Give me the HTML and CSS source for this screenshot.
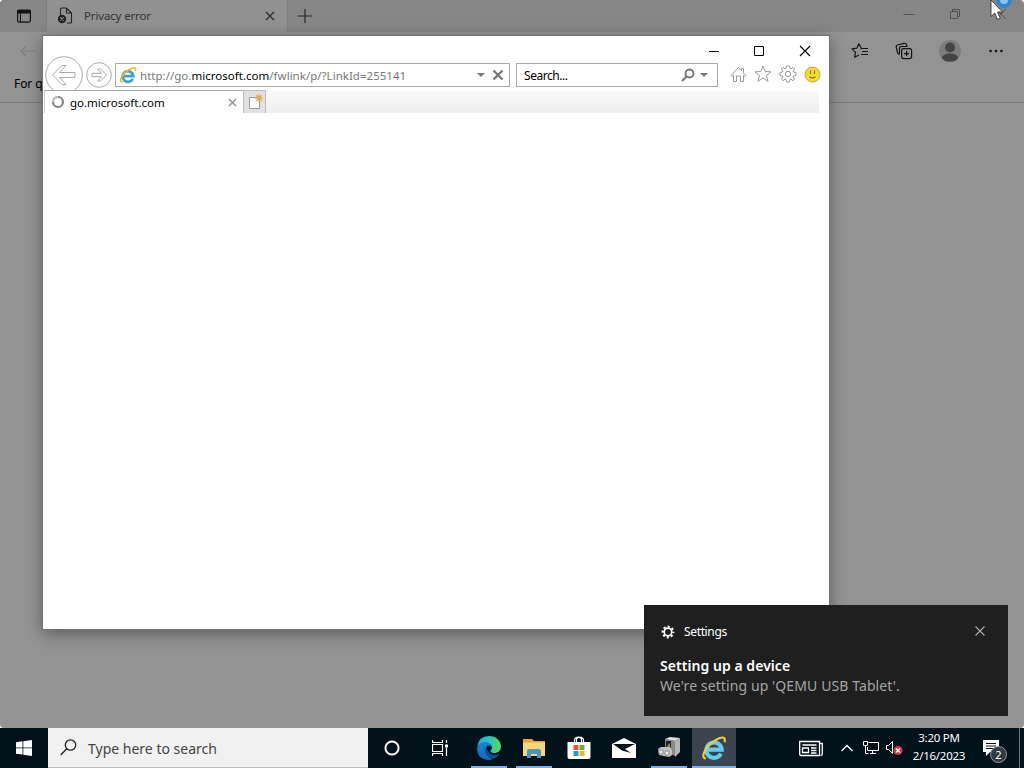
FILE: index.html
```html
<!DOCTYPE html>
<html lang="en">
<head>
    <meta charset="utf-8">
    <title>Desktop</title>
    <link rel="stylesheet" href="styles.css">
</head>
<body>
    <div class="desktop">
        <!-- Edge, behind -->
        <div class="edge">
            <div class="edge-tabs">
                <div class="tab-actions">
                    <svg width="16" height="16" viewBox="0 0 16 16"><rect x="1.6" y="2.1" width="12.8" height="12" rx="1.5" fill="none" stroke="#111" stroke-width="1.2"/><path d="M1.5 2h13v3.5h-13z" fill="#111"/><path d="M4.5 5v9" stroke="#111"/></svg>
                </div>
                <div class="edge-tab">
                    <svg width="17" height="17" viewBox="0 0 17 17" fill="none" stroke="#222" stroke-width="1.1"><path d="M3.5 8V2Q3.500 1 4.500 1H9.500L14.500 6V15Q14.500 16 13.500 16H10M9.500 1V6H14.500"/><circle cx="5" cy="12" r="4.200" fill="#222" stroke="none"/><path d="M3.400 10.400L6.600 13.600M6.600 10.400L3.400 13.600" stroke="#939393"/></svg>
                    <span class="edge-tab-title">Privacy error</span>
                    <svg width="10" height="10" viewBox="0 0 10 10"><path d="M1 1l8 8M9 1l-8 8" stroke="#333" stroke-width="1.5"/></svg>
                </div>
                <svg class="new-tab" width="14" height="14" viewBox="0 0 14 14"><path d="M7 0v14M0 7h14" stroke="#222" stroke-width="1.1"/></svg>
                <div class="edge-controls">
                    <svg width="12" height="12" viewBox="0 0 12 12"><path d="M.5 6.500h11" stroke="#555"/></svg>
                    <svg width="12" height="12" viewBox="0 0 12 12" fill="none" stroke="#505050"><path d="M1.500 3.500h7v7h-7zM3.500 3.500v-2h7v7h-2"/></svg>
                    <svg width="12" height="12" viewBox="0 0 12 12"><path d="M1 1l10 10M11 1L1 11" stroke="#555"/></svg>
                </div>
            </div>
            <div class="edge-toolbar">
                <svg class="edge-back" width="16" height="12" viewBox="0 0 16 12"><path d="M16 6H1M6 1L1 6l5 5" fill="none" stroke="#7c7c7c" stroke-width="1.200"/></svg>
                <div class="edge-tools">
                    <svg width="18" height="18" viewBox="0 0 18 18" fill="none" stroke="#151515" stroke-width="1.200" stroke-linejoin="round"><path d="M10.500 6.500L7.800 1.800 5.800 6.200 1 6.900 4.500 10.400 3.700 15.300 8 13M9.500 6.500H17M11 9.500h6M10 12.500h7"/></svg>
                    <svg width="18" height="18" viewBox="0 0 18 18" fill="none" stroke="#151515" stroke-width="1.200" stroke-linejoin="round"><rect x="6.600" y="6.600" width="10" height="10" rx="2"/><path d="M11.600 9v5M9 11.600h5M4.500 12.500Q3 12 2.500 10.500L1.200 5Q1 3.500 2.500 3L9 1.300Q10.500 1 11.300 2.300L12.300 4.500M4.500 12V6.500Q4.500 4.500 6.500 4.500H12.300"/></svg>
                    <svg width="22" height="22" viewBox="0 0 22 22"><circle cx="11" cy="11" r="11" fill="#7d7d7d"/><circle cx="11" cy="7.500" r="5" fill="#444"/><ellipse cx="11" cy="17.600" rx="8" ry="4" fill="#444"/></svg>
                    <svg width="14" height="4" viewBox="0 0 14 4" fill="#111"><circle cx="1.600" cy="2" r="1.300"/><circle cx="7" cy="2" r="1.300"/><circle cx="12.400" cy="2" r="1.300"/></svg>
                </div>
            </div>
            <div class="edge-info"><span>For q</span></div>
        </div>

        <!-- Internet Explorer -->
        <div class="ie">
            <div class="ie-title">
                <svg width="12" height="12" viewBox="0 0 12 12"><path d="M1 6.500h10" stroke="#000"/></svg>
                <svg width="12" height="12" viewBox="0 0 12 12"><path d="M1.500 1.500h9v9h-9z" fill="none" stroke="#000"/></svg>
                <svg width="12" height="12" viewBox="0 0 12 12"><path d="M1 1l10 10M11 1L1 11" stroke="#000" stroke-width="1.100"/></svg>
            </div>
            <div class="ie-nav">
                <svg class="ie-back" width="38" height="38" viewBox="0 0 38 38" fill="#fff" stroke="#aaa"><circle cx="19" cy="19" r="18.300"/><path d="M7.500 19L17 9.500H21L14.500 16.500H30V21.500H14.500L21 28.500H17Z"/></svg>
                <svg class="ie-forward" width="26" height="26" viewBox="0 0 26 26" fill="#fff" stroke="#aaa"><circle cx="13" cy="13" r="12.300"/><path d="M20.500 13L14.500 7H11.500L15.500 11.300H6V14.700H15.500L11.500 19H14.500Z"/></svg>
                <div class="address">
                    <svg width="18" height="18" viewBox="0 0 32 32" fill="none"><path d="M9 18H25.500A9.500 9.500 0 1 0 24.500 23" stroke="#3ba0d8" stroke-width="5"/><path d="M6 29C-2 28 6 14 17 7C25 2 31 1 29 9" stroke="#eebb20" stroke-width="3"/></svg>
                    <span class="url">http://go.<b>microsoft.com</b>/fwlink/p/?LinkId=255141</span>
                    <svg class="caret" width="8" height="4" viewBox="0 0 8 4"><path d="M0 0h8L4 4z" fill="#777"/></svg>
                    <svg width="12" height="12" viewBox="0 0 12 12"><path d="M1.500 1.500l9 9M10.500 1.500l-9 9" stroke="#777" stroke-width="2.300"/></svg>
                </div>
                <div class="ie-search">
                    <span class="search-label">Search...</span>
                    <svg width="14" height="14" viewBox="0 0 14 14" fill="none" stroke="#777" stroke-width="1.900"><circle cx="8.500" cy="5.500" r="4"/><path d="M5.500 8.500L1 13"/></svg>
                    <svg class="caret" width="8" height="4" viewBox="0 0 8 4"><path d="M0 0h8L4 4z" fill="#777"/></svg>
                </div>
                <div class="ie-icons">
                    <svg width="17" height="17" viewBox="0 0 17 17" fill="#fff" stroke="#999"><path d="M1 9.500L8.500 1.500 11.500 4.700V2.500H13.500V7L16 9.500 14.500 10.500 13.500 9.500V15.500H10.500V10H6.500V15.500H3.500V9.500L2.300 10.700Z"/></svg>
                    <svg width="18" height="18" viewBox="0 0 18 18" fill="#fff" stroke="#999"><path d="M9 1l2.100 5.500 5.900.3-4.600 3.700 1.600 5.800L9 13 4 16.300l1.600-5.800L1 6.800l5.900-.3z"/></svg>
                    <svg width="18" height="18" viewBox="-9 -9 18 18" fill="#fff" stroke="#999"><path d="M-1.500-8H1.500L2-5.500 3-5 5-6.700 6.700-5 5-3 5.500-2 8-1.500V1.500L5.500 2 5 3 6.700 5 5 6.700 3 5 2 5.500 1.500 8H-1.500L-2 5.500-3 5-5 6.700-6.700 5-5 3-5.500 2-8 1.500V-1.500L-5.500-2-5-3-6.700-5-5-6.700-3-5-2-5.500Z"/><circle r="2.700"/></svg>
                    <svg width="17" height="17" viewBox="0 0 17 17"><circle cx="8.500" cy="8.500" r="7.500" fill="#f4dc32" stroke="#b5a647"/><path d="M6.500 4.500v3.500M10.500 4.500v3.500M5.500 10.800Q8.500 13 11.500 10.800" fill="none" stroke="#8b761c" stroke-width="1.200"/></svg>
                </div>
            </div>
            <div class="ie-tabs">
                <div class="ie-tab">
                    <svg width="14" height="14" viewBox="0 0 14 14" fill="none" stroke-width="2.200"><circle cx="7" cy="7" r="5" stroke="#858585"/><path d="M2 7a5 5 0 0 1 5-5" stroke="#c5c5c5"/></svg>
                    <span class="ie-tab-title">go.microsoft.com</span>
                    <svg width="9" height="9" viewBox="0 0 9 9"><path d="M1 1l7 7M8 1L1 8" stroke="#999" stroke-width="1.700"/></svg>
                </div>
                <div class="ie-new-tab">
                    <svg width="18" height="18" viewBox="0 0 18 18"><path d="M3.500 4.500h10v11h-10z" fill="#fff" stroke="#999"/><path d="M13 1v8M9 5h8M10.200 2.200l5.600 5.600M15.800 2.200l-5.600 5.600" stroke="#eca438" stroke-width="1.200"/></svg>
                </div>
                <div class="ie-tab-space"></div>
            </div>
        </div>

        <!-- notification -->
        <div class="toast">
            <div class="toast-head">
                <svg width="14" height="14" viewBox="-7 -7 14 14" fill="none" stroke="#fff"><circle r="3.800" stroke-width="1.700"/><circle r="5.400" stroke-width="2" stroke-dasharray="2.100 2.141" stroke-dashoffset="1.050"/></svg>
                <span class="toast-app">Settings</span>
                <svg class="toast-close" width="10" height="10" viewBox="0 0 10 10"><path d="M.5.5l9 9M9.500.5l-9 9" stroke="#aaa" stroke-width="1.200"/></svg>
            </div>
            <div class="toast-title"><span>Setting up a device</span></div>
            <div class="toast-text"><span>We're setting up 'QEMU USB Tablet'.</span></div>
        </div>

        <div class="taskbar">
            <div class="start">
                <svg width="16" height="16" viewBox="0 0 16 16" fill="#fff"><path d="M0 2.200L6.500 1.300V7.500H0zM7.300 1.200L16 0V7.500H7.300zM0 8.300H6.500V14.600L0 13.700zM7.300 8.300H16V16L7.300 14.700z"/></svg>
            </div>
            <div class="task-search">
                <svg width="17" height="17" viewBox="0 0 17 17" fill="none" stroke="#222" stroke-width="1.300"><circle cx="10.500" cy="6" r="5.200"/><path d="M6.800 9.700L.7 16"/></svg>
                <span>Type here to search</span>
            </div>
            <div class="sys-button"><svg width="16" height="16" viewBox="0 0 16 16"><circle cx="8" cy="8" r="6.600" fill="none" stroke="#fff" stroke-width="2"/></svg></div>
            <div class="sys-button"><svg width="16" height="16" viewBox="0 0 16 16" fill="none" stroke="#fff" stroke-width="1.200"><path d="M.5 0v2.500h10V0M.5 4.500h10v7H.5zM.5 16v-2.500h10V16M14.500 0v3M14.500 8v8"/><path d="M13 4.500h3v3h-3z" fill="#fff" stroke="none"/></svg></div>
            <div class="apps">
                <div class="app running">
                    <svg width="24" height="24" viewBox="0 0 24 24"><defs><linearGradient id="edgeTop"><stop offset="0" stop-color="#24a8e0"/><stop offset=".55" stop-color="#2bc4b8"/><stop offset="1" stop-color="#65d74e"/></linearGradient><linearGradient id="edgeBody" x2=".5" y2="1"><stop offset="0" stop-color="#1687d8"/><stop offset="1" stop-color="#1466bd"/></linearGradient></defs><path d="M.3 11Q1.500 0 12 0C19 0 24 5 24 10.500C24 15 20.500 17 17.500 17Q13.500 17 13.500 15C13.500 14 15 13.500 15 11.500Q14 7 9 7Q3 7 .3 11Z" fill="url(#edgeTop)"/><path d="M.2 12Q2.500 5.500 9 6Q14 6.600 15 11Q12 8.500 9.500 11Q6.500 16 12 21Q15.500 24 18 22.300Q15 24 12 24Q0 23.500.2 12Z" fill="url(#edgeBody)"/><path d="M9.500 11Q6.500 15 10 19.500Q14.500 24 18 22.300Q22 20 22.500 17.500Q19 20 15 18.500Q10.500 17 9.500 11Z" fill="#124d94"/></svg>
                </div>
                <div class="app running">
                    <svg width="22" height="20" viewBox="0 0 22 20"><path d="M0 1h9l2 2h11v15H0z" fill="#e5a72f"/><path d="M0 4.500h22V18H0z" fill="#f9d775"/><path d="M4 20v-7q0-2 2-2h10q2 0 2 2v7h-4v-4H8v4z" fill="#4a95c4"/></svg>
                </div>
                <div class="app">
                    <svg width="24" height="24" viewBox="0 0 24 24"><path d="M7.500 7V4.500Q7.500 1 12 1T16.500 4.500V7M9.500 6V3Q12 0 14.500 3V6" fill="none" stroke="#fff" stroke-width="1.200"/><path d="M.5 6h23v15q0 2-2 2h-19q-2 0-2-2z" fill="#fff"/><path d="M6.500 9h5v5h-5z" fill="#e6532c"/><path d="M12.500 9h5v5h-5z" fill="#74aa35"/><path d="M6.500 15h5v5h-5z" fill="#1d9ad7"/><path d="M12.500 15h5v5h-5z" fill="#f5b81e"/></svg>
                </div>
                <div class="app">
                    <svg width="24" height="20" viewBox="0 0 24 20"><path d="M0 6L12 0 24 6V20H0z" fill="#fff"/><path d="M1 6H23L13 11 19 15 10 12.500z" fill="#02121b"/></svg>
                </div>
                <div class="app running">
                    <svg width="23" height="22" viewBox="0 0 23 22"><path d="M7 2l10 2v15l-10-4z" fill="#8a8a8a"/><path d="M7 2l5-2 10 1-5 3z" fill="#e1e1e1"/><path d="M17 4l5-3v14l-5 5z" fill="#b5b5b5"/><path d="M8 4h5v8H8z" fill="#1c2426"/><path d="M9 9l3-3v5z" fill="#9b9740"/><path d="M0 12l3-2h9l2 3v5l-3 2-10-2z" fill="#c2c2c2"/><rect x="1" y="13" width="4" height="4" rx="1" fill="#eee" stroke="#888"/><rect x="7" y="14" width="4" height="4" rx="1" fill="#eee" stroke="#888"/></svg>
                </div>
                <div class="app running active">
                    <svg width="26" height="26" viewBox="0 0 32 32" fill="none"><path d="M9 18H25.500A9.500 9.500 0 1 0 24.500 23" stroke="#65cced" stroke-width="5"/><path d="M6 29C-2 28 6 14 17 7C25 2 31 1 29 9" stroke="#f4ca36" stroke-width="2.600"/></svg>
                </div>
            </div>
            <div class="tray">
                <svg width="24" height="17" viewBox="0 0 24 17" fill="none" stroke="#fff" stroke-width="1.300"><path d="M20.500 15.500H2Q.7 15.500.7 14V1.500H20.500zM20.500 3.500H23.300V14Q23.300 15.500 21.500 15.500M3.500 5h14M3.500 8h6v4.500h-6zM12 8h5.500M12 10.500h5.500M12 13h5.500"/></svg>
                <svg class="chevron" width="12" height="8" viewBox="0 0 12 8"><path d="M.5 7L6 1.500 11.500 7" fill="none" stroke="#fff" stroke-width="1.300"/></svg>
                <svg class="network" width="16" height="14" viewBox="0 0 16 14" fill="none" stroke="#fff"><path d="M5.500 1.500h10v8h-11V6M7 12.500h6M9.500 10v2M.5.500h4v4h-4zM2.500 4.500v8h3"/></svg>
                <svg class="volume" width="17" height="16" viewBox="0 0 17 16"><path d="M.5 5.500h2L6.500 1.500v12l-4-4h-2z" fill="none" stroke="#fff"/><circle cx="12" cy="10.500" r="4.600" fill="#c93b40"/><path d="M10 8.500l4 4M14 8.500l-4 4" stroke="#fff" stroke-width="1.200"/></svg>
            </div>
            <div class="clock"><span class="time">3:20 PM</span><span class="date">2/16/2023</span></div>
            <div class="action-center">
                <svg width="16" height="16" viewBox="0 0 16 16"><path d="M0 0h16v12H7l-4 4v-4H0z" fill="#fff"/><path d="M3 3.500h10M3 6h10M3 8.500h7" stroke="#02121b"/></svg>
                <span class="badge">2</span>
            </div>
            <div class="show-desktop"></div>
        </div>

        <svg class="cursor" width="34" height="22" viewBox="0 0 34 22"><circle cx="14" cy="0" r="6" fill="#8dc3ea" stroke="#2b86d0" stroke-width="4"/><path d="M31 0h3v3Q33 1 31 0z" fill="#fff"/><path d="M1 0V16.500L4.700 13 7.500 19.500 10.300 18.200 7.500 12H12.500Z" fill="#fff" stroke="#222" stroke-width=".8"/></svg>
    </div>
</body>
</html>
```

FILE: styles.css
```css
* {
    box-sizing: border-box;
}
body {
    margin: 0;
    font-family: "Noto Sans", "Open Sans", sans-serif;
    font-size: 12px;
    color: #000;
}
svg {
    display: block;
    flex: none;
}
.desktop {
    position: relative;
    width: 1024px;
    height: 768px;
    overflow: hidden;
    background: #fff;
}
span {
    white-space: nowrap;
}

/* Edge */
.edge {
    height: 728px;
    background: #939393;
    border-radius: 4px;
    overflow: hidden;
}
.edge-tabs {
    display: flex;
    align-items: center;
    height: 32px;
    padding-bottom: 1px;
    background: #868686;
}
.tab-actions {
    width: 47px;
    height: 32px;
    padding: 8px 16px;
    border-right: 1px solid #7c7c7c;
    border-radius: 0 0 6px 0;
}
.edge-tab {
    display: flex;
    align-items: center;
    width: 241px;
    height: 32px;
    padding: 0 12px 0 10px;
    background: #919191;
    border-right: 1px solid #808080;
}
.edge-tab-title {
    flex: 1;
    margin-left: 10px;
    font-size: 11.5px;
    letter-spacing: -0.15px;
    color: #333;
}
.new-tab {
    margin-left: 10px;
}
.edge-controls {
    display: flex;
    gap: 34px;
    margin-left: auto;
    margin-right: 17px;
    padding-bottom: 3px;
}
.edge-toolbar {
    display: flex;
    align-items: center;
    height: 38px;
    padding: 0 21px 0 20px;
}
.edge-tools {
    display: flex;
    align-items: center;
    gap: 26px;
    margin-left: auto;
}
.edge-tools svg:last-child {
    margin-left: 2px;
}
.edge-info {
    height: 33px;
    padding: 5px 14px;
    border-bottom: 1px solid #7c7c7c;
    letter-spacing: -0.1px;
}

/* Internet Explorer */
.ie {
    position: absolute;
    left: 43px;
    top: 36px;
    width: 786px;
    height: 593px;
    background: #fff;
    box-shadow: 0 0 0 1px #707070, 0 4px 16px rgba(0,0,0,0.4);
}
.ie-title {
    display: flex;
    justify-content: flex-end;
    gap: 33.5px;
    height: 19px;
    padding: 9px 18px 0 0;
}
.ie-title svg:last-child {
    margin-left: 1px;
}
.ie-title svg:first-child {
    margin-right: -1px;
}
.ie-nav {
    display: flex;
    align-items: center;
    height: 35px;
    padding-left: 2px;
}
.ie-back {
    margin-top: 4px;
}
.ie-forward {
    margin: 5px 3px 0;
}
.address,
.ie-search {
    display: flex;
    align-items: center;
    height: 24px;
    margin-top: 5px;
    border: 1px solid #aaa;
}
.address {
    width: 395px;
    padding: 0 5px 0 3px;
}
.url {
    flex: 1;
    margin-left: 3px;
    font-size: 11.5px;
    letter-spacing: 0.02px;
    color: #777;
}
.url b {
    font-weight: normal;
    color: #000;
}
.address .caret {
    margin-right: 7px;
}
.ie-search {
    width: 202px;
    margin-left: 6px;
    padding: 0 9px 0 7px;
}
.search-label {
    flex: 1;
    letter-spacing: -0.45px;
}
.ie-search .caret {
    margin-left: 5px;
}
.ie-icons {
    display: flex;
    align-items: center;
    gap: 7px;
    margin-left: 12px;
    margin-top: 3px;
}
.ie-tabs {
    position: relative;
    display: flex;
    height: 23px;
    padding-right: 10px;
}
.ie-tab {
    display: flex;
    align-items: center;
    width: 199px;
    padding: 0 6px 0 6px;
    background: #fff;
    border-top: 1px solid #aaa;
    border-left: 1px solid #ccc;
    margin-left: 1px;
}
.ie-tab-title {
    flex: 1;
    margin-left: 5px;
    font-size: 11.5px;
}
.ie-new-tab {
    width: 23px;
    padding: 2px;
    background: #e1e1e1;
    border: 1px solid #bbb;
    border-bottom: 0;
}
.ie-tab-space {
    flex: 1;
    background: linear-gradient(#fafafa, #ededed);
}

/* notification */
.toast {
    position: absolute;
    left: 644px;
    top: 605px;
    width: 364px;
    height: 111px;
    padding: 18px 16px;
    background: #1f1f1f;
    color: #fff;
}
.toast-head {
    display: flex;
    align-items: center;
    height: 17px;
    padding: 0 7px 0 1px;
}
.toast-app {
    flex: 1;
    margin-left: 9px;
    letter-spacing: -0.35px;
}
.toast-close {
    margin-bottom: 1px;
}
.toast-title {
    margin-top: 16px;
    font-size: 14px;
    line-height: 20px;
    font-weight: 600;
    letter-spacing: 0.05px;
}
.toast-text {
    font-size: 14px;
    line-height: 20px;
    letter-spacing: 0.1px;
    color: #a5a5a5;
}

/* taskbar */
.taskbar {
    display: flex;
    height: 40px;
    background: #02121b;
    color: #fff;
}
.start {
    width: 48px;
    padding: 12px 16px;
}
.task-search {
    display: flex;
    align-items: center;
    gap: 11px;
    width: 320px;
    flex: none;
    padding-left: 12px;
    background: #f1f1f1;
    border-bottom: 1px solid #bbb;
    font-size: 14px;
    color: #444;
}
.task-search span {
    padding-top: 2px;
}
.start,
.sys-button,
.app,
.clock,
.action-center {
    flex: none;
}
.sys-button {
    width: 48px;
    padding: 12px 16px;
}
.apps {
    display: flex;
    gap: 1px;
    margin-left: 3px;
}
.app {
    position: relative;
    display: flex;
    align-items: center;
    justify-content: center;
    width: 44px;
}
.running::after {
    content: "";
    position: absolute;
    left: 4px;
    right: 4px;
    bottom: 0;
    height: 2px;
    background: #7ab0e6;
}
.active {
    background: #3b444f;
}
.active::after {
    left: 0;
    right: 0;
}
.tray {
    display: flex;
    align-items: center;
    margin-left: 63px;
}
.chevron {
    margin-left: 18px;
}
.network {
    margin-left: 10px;
}
.volume {
    margin-left: 7px;
}
.clock {
    display: flex;
    flex-direction: column;
    align-items: center;
    width: 72px;
    padding-top: 1px;
    line-height: 18px;
    font-size: 11.5px;
    letter-spacing: -0.25px;
}
.action-center {
    position: relative;
    width: 44px;
    padding: 12px 0 0 8px;
}
.badge {
    position: absolute;
    left: 15px;
    top: 18px;
    width: 17px;
    height: 17px;
    border: 1px solid #999;
    border-radius: 50%;
    background: #303b42;
    font-size: 11px;
    line-height: 15px;
    text-align: center;
}
.show-desktop {
    flex: none;
    margin-left: auto;
    width: 5px;
    border-left: 1px solid #6b747a;
}
.cursor {
    position: absolute;
    left: 990px;
    top: 0;
}
```
